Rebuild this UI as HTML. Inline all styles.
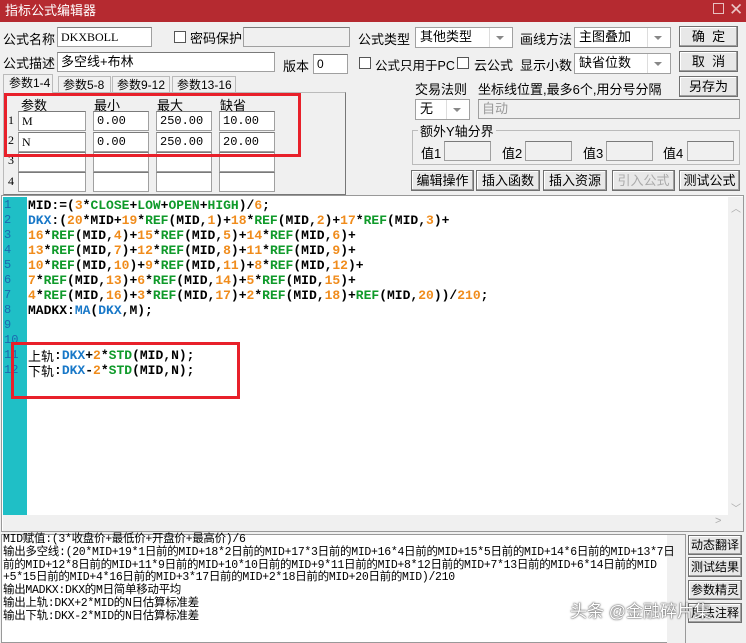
<!DOCTYPE html>
<html><head><meta charset="utf-8"><style>
*{box-sizing:border-box;margin:0;padding:0}
body{width:746px;height:643px;background:#f0f0f0;position:relative;overflow:hidden;font-family:"Liberation Sans","Noto Sans CJK SC",sans-serif;font-size:13px;color:#000}
.a{position:absolute;white-space:nowrap}
.in{position:absolute;background:#fff;border:1px solid #a0a0a0;border-top-color:#7a7a7a;font-size:12px;padding:2px 3px;line-height:14px;white-space:nowrap}
.dis{background:#f0f0f0}
.cb{position:absolute;width:12px;height:12px;background:#fff;border:1px solid #555}
.btn{position:absolute;background:#e8e8e8;border:1px solid #707070;text-align:center;font-size:13px;line-height:19px;white-space:nowrap;box-shadow:inset -1px -1px 0 #a0a0a0,inset 1px 1px 0 #fff}
.sel{position:absolute;background:#fff;border:1px solid #a0a0a0;font-size:13px;line-height:18px;padding-left:4px}
.sel:after{content:"";position:absolute;right:0;top:0;width:22px;height:100%;border-left:1px solid #ddd;background:#fff}
.sel i{position:absolute;right:8px;top:8px;width:0;height:0;border-left:4px solid transparent;border-right:4px solid transparent;border-top:4px solid #888;z-index:2}
.code{position:absolute;left:28px;top:198px;font-family:"Liberation Mono",monospace;font-weight:bold;font-size:13px;line-height:15px;white-space:pre;color:#000}
.code .c{font-weight:normal;font-family:'Noto Sans CJK SC',sans-serif;display:inline-block;height:15px;line-height:15px;vertical-align:top;overflow:visible}
.n{color:#f08c1c}.f{color:#0f9a2a}.b{color:#1878c8}
.ln{position:absolute;left:4px;width:20px;font-family:"Liberation Mono",monospace;font-size:12px;color:#1a6ab0;line-height:15px}
.bt{position:absolute;left:3px;top:534px;font-family:"Liberation Mono","Noto Sans CJK SC",monospace;font-size:11.5px;line-height:12.8px;white-space:pre;letter-spacing:-0.3px}
</style></head><body>
<div class="a" style="left:0;top:0;width:746px;height:22px;background:#b52a30;color:#fff;font-size:13px;line-height:22px;padding-left:5px">指标公式编辑器</div>
<div class="a" style="left:713px;top:3px;width:11px;height:11px;border:1px solid #e8c0c0"></div>
<div class="a" style="left:729px;top:0;color:#eac4c4;font-size:17px;line-height:20px">✕</div>

<div class="a" style="left:3px;top:29px">公式名称</div>
<div class="in" style="left:57px;top:27px;width:95px;height:20px;font-family:'Liberation Serif',serif">DKXBOLL</div>
<div class="cb" style="left:174px;top:31px"></div>
<div class="a" style="left:190px;top:28px">密码保护</div>
<div class="in dis" style="left:243px;top:27px;width:107px;height:20px"></div>
<div class="a" style="left:3px;top:53px">公式描述</div>
<div class="in" style="left:57px;top:52px;width:218px;height:20px;font-size:13px">多空线+布林</div>
<div class="a" style="left:283px;top:56px">版本</div>
<div class="in" style="left:313px;top:54px;width:35px;height:20px">0</div>

<div class="a" style="left:3px;top:74px;width:50px;height:19px;font-size:12px;line-height:17px;padding-left:5px;border:1px solid #bbb;border-bottom:none;background:#f0f0f0;z-index:2">参数1-4</div>
<div class="a" style="left:58px;top:76px;width:53px;height:17px;font-size:12px;line-height:17px;padding-left:4px;border:1px solid #bbb">参数5-8</div>
<div class="a" style="left:112px;top:76px;width:58px;height:17px;font-size:12px;line-height:17px;padding-left:4px;border:1px solid #bbb">参数9-12</div>
<div class="a" style="left:172px;top:76px;width:64px;height:17px;font-size:12px;line-height:17px;padding-left:4px;border:1px solid #bbb">参数13-16</div>
<div class="a" style="left:3px;top:92px;width:343px;height:103px;border:1px solid #bbb;border-right-color:#777;border-bottom-color:#777"></div>
<div class="a" style="left:21px;top:95px">参数</div><div class="a" style="left:94px;top:95px">最小</div><div class="a" style="left:157px;top:95px">最大</div><div class="a" style="left:220px;top:95px">缺省</div>
<div class="a" style="left:8px;top:113px;font-size:12px;font-family:'Liberation Serif',serif">1</div>
<div class="a" style="left:8px;top:133px;font-size:12px;font-family:'Liberation Serif',serif">2</div>
<div class="a" style="left:8px;top:153px;font-size:12px;font-family:'Liberation Serif',serif">3</div>
<div class="a" style="left:8px;top:174px;font-size:12px;font-family:'Liberation Serif',serif">4</div>
<div class="in" style="left:18px;top:111px;width:68px;height:20px;font-family:'Liberation Serif',serif">M</div>
<div class="in" style="left:93px;top:111px;width:56px;height:20px;font-family:'Liberation Mono',monospace">0.00</div>
<div class="in" style="left:156px;top:111px;width:56px;height:20px;font-family:'Liberation Mono',monospace">250.00</div>
<div class="in" style="left:219px;top:111px;width:56px;height:20px;font-family:'Liberation Mono',monospace">10.00</div>
<div class="in" style="left:18px;top:132px;width:68px;height:20px;font-family:'Liberation Serif',serif">N</div>
<div class="in" style="left:93px;top:132px;width:56px;height:20px;font-family:'Liberation Mono',monospace">0.00</div>
<div class="in" style="left:156px;top:132px;width:56px;height:20px;font-family:'Liberation Mono',monospace">250.00</div>
<div class="in" style="left:219px;top:132px;width:56px;height:20px;font-family:'Liberation Mono',monospace">20.00</div>
<div class="in" style="left:18px;top:152px;width:68px;height:20px"></div><div class="in" style="left:93px;top:152px;width:56px;height:20px"></div><div class="in" style="left:156px;top:152px;width:56px;height:20px"></div><div class="in" style="left:219px;top:152px;width:56px;height:20px"></div>
<div class="in" style="left:18px;top:172px;width:68px;height:20px"></div><div class="in" style="left:93px;top:172px;width:56px;height:20px"></div><div class="in" style="left:156px;top:172px;width:56px;height:20px"></div><div class="in" style="left:219px;top:172px;width:56px;height:20px"></div>
<div class="a" style="left:4px;top:93px;width:297px;height:64px;border:3px solid #e8202a"></div>

<div class="a" style="left:358px;top:29px">公式类型</div>
<div class="sel" style="left:415px;top:27px;width:98px;height:21px">其他类型<i></i></div>
<div class="a" style="left:520px;top:29px">画线方法</div>
<div class="sel" style="left:574px;top:27px;width:97px;height:21px">主图叠加<i></i></div>
<div class="btn" style="left:679px;top:26px;width:59px;height:21px">确&nbsp;&nbsp;定</div>
<div class="cb" style="left:359px;top:57px"></div>
<div class="a" style="left:375px;top:55px;font-size:12.5px">公式只用于PC</div>
<div class="cb" style="left:457px;top:57px"></div>
<div class="a" style="left:474px;top:55px">云公式</div>
<div class="a" style="left:520px;top:55px">显示小数</div>
<div class="sel" style="left:574px;top:53px;width:97px;height:21px">缺省位数<i></i></div>
<div class="btn" style="left:679px;top:51px;width:59px;height:21px">取&nbsp;&nbsp;消</div>
<div class="a" style="left:415px;top:79px">交易法则</div>
<div class="a" style="left:478px;top:79px">坐标线位置,最多6个,用分号分隔</div>
<div class="btn" style="left:679px;top:76px;width:59px;height:21px">另存为</div>
<div class="sel" style="left:415px;top:99px;width:55px;height:21px">无<i></i></div>
<div class="in dis" style="left:478px;top:99px;width:262px;height:20px;color:#999;font-size:13px">自动</div>
<div class="a" style="left:412px;top:130px;width:328px;height:35px;border:1px solid #bbb"></div>
<div class="a" style="left:418px;top:121px;background:#f0f0f0;padding:0 2px">额外Y轴分界</div>
<div class="a" style="left:421px;top:143px">值1</div><div class="in dis" style="left:444px;top:141px;width:47px;height:20px"></div>
<div class="a" style="left:502px;top:143px">值2</div><div class="in dis" style="left:525px;top:141px;width:47px;height:20px"></div>
<div class="a" style="left:583px;top:143px">值3</div><div class="in dis" style="left:606px;top:141px;width:47px;height:20px"></div>
<div class="a" style="left:663px;top:143px">值4</div><div class="in dis" style="left:687px;top:141px;width:47px;height:20px"></div>
<div class="btn" style="left:411px;top:170px;width:63px;height:21px">编辑操作</div>
<div class="btn" style="left:476px;top:170px;width:64px;height:21px">插入函数</div>
<div class="btn" style="left:543px;top:170px;width:64px;height:21px">插入资源</div>
<div class="btn" style="left:612px;top:170px;width:63px;height:21px;color:#aaa">引入公式</div>
<div class="btn" style="left:679px;top:170px;width:61px;height:21px">测试公式</div>

<div class="a" style="left:1px;top:195px;width:743px;height:337px;background:#fff;border:1px solid #999"></div>
<div class="a" style="left:3px;top:197px;width:24px;height:318px;background:#1fbfc6"></div>
<div class="a" style="left:728px;top:197px;width:15px;height:318px;background:#f0f0f0"></div>
<div class="a" style="left:3px;top:515px;width:740px;height:16px;background:#f0f0f0"></div>
<div class="a" style="left:731px;top:200px;color:#aaa;font-size:10px">︿</div>
<div class="a" style="left:731px;top:500px;color:#aaa;font-size:10px">﹀</div>
<div class="a" style="left:715px;top:515px;color:#aaa;font-size:11px">&gt;</div>
<div class="ln" style="top:198px">1<br>2<br>3<br>4<br>5<br>6<br>7<br>8<br>9<br>10<br>11<br>12</div>
<div class="code"><span>MID:=(</span><span class="n">3</span>*<span class="f">CLOSE</span>+<span class="f">LOW</span>+<span class="f">OPEN</span>+<span class="f">HIGH</span>)/<span class="n">6</span>;
<span class="b">DKX</span>:(<span class="n">20</span>*MID+<span class="n">19</span>*<span class="f">REF</span>(MID,<span class="n">1</span>)+<span class="n">18</span>*<span class="f">REF</span>(MID,<span class="n">2</span>)+<span class="n">17</span>*<span class="f">REF</span>(MID,<span class="n">3</span>)+
<span class="n">16</span>*<span class="f">REF</span>(MID,<span class="n">4</span>)+<span class="n">15</span>*<span class="f">REF</span>(MID,<span class="n">5</span>)+<span class="n">14</span>*<span class="f">REF</span>(MID,<span class="n">6</span>)+
<span class="n">13</span>*<span class="f">REF</span>(MID,<span class="n">7</span>)+<span class="n">12</span>*<span class="f">REF</span>(MID,<span class="n">8</span>)+<span class="n">11</span>*<span class="f">REF</span>(MID,<span class="n">9</span>)+
<span class="n">10</span>*<span class="f">REF</span>(MID,<span class="n">10</span>)+<span class="n">9</span>*<span class="f">REF</span>(MID,<span class="n">11</span>)+<span class="n">8</span>*<span class="f">REF</span>(MID,<span class="n">12</span>)+
<span class="n">7</span>*<span class="f">REF</span>(MID,<span class="n">13</span>)+<span class="n">6</span>*<span class="f">REF</span>(MID,<span class="n">14</span>)+<span class="n">5</span>*<span class="f">REF</span>(MID,<span class="n">15</span>)+
<span class="n">4</span>*<span class="f">REF</span>(MID,<span class="n">16</span>)+<span class="n">3</span>*<span class="f">REF</span>(MID,<span class="n">17</span>)+<span class="n">2</span>*<span class="f">REF</span>(MID,<span class="n">18</span>)+<span class="f">REF</span>(MID,<span class="n">20</span>))/<span class="n">210</span>;
MADKX:<span class="b">MA</span>(<span class="b">DKX</span>,M);


<span class="c">上轨</span>:<span class="b">DKX</span>+<span class="n">2</span>*<span class="f">STD</span>(MID,N);
<span class="c">下轨</span>:<span class="b">DKX</span>-<span class="n">2</span>*<span class="f">STD</span>(MID,N);</div>
<div class="a" style="left:11px;top:342px;width:229px;height:57px;border:3px solid #e8202a"></div>

<div class="a" style="left:1px;top:534px;width:685px;height:109px;background:#fff;border:1px solid #999"></div>
<div class="a" style="left:667px;top:535px;width:18px;height:108px;background:#f0f0f0"></div>
<div class="bt">MID赋值:(3*收盘价+最低价+开盘价+最高价)/6
输出多空线:(20*MID+19*1日前的MID+18*2日前的MID+17*3日前的MID+16*4日前的MID+15*5日前的MID+14*6日前的MID+13*7日
前的MID+12*8日前的MID+11*9日前的MID+10*10日前的MID+9*11日前的MID+8*12日前的MID+7*13日前的MID+6*14日前的MID
+5*15日前的MID+4*16日前的MID+3*17日前的MID+2*18日前的MID+20日前的MID)/210
输出MADKX:DKX的M日简单移动平均
输出上轨:DKX+2*MID的N日估算标准差
输出下轨:DKX-2*MID的N日估算标准差</div>
<div class="btn" style="left:688px;top:535px;width:54px;height:20px;font-size:12px">动态翻译</div>
<div class="btn" style="left:688px;top:557px;width:54px;height:20px;font-size:12px">测试结果</div>
<div class="btn" style="left:688px;top:580px;width:54px;height:20px;font-size:12px">参数精灵</div>
<div class="btn" style="left:688px;top:603px;width:54px;height:20px;font-size:12px">用法注释</div>
<div class="a" style="left:570px;top:597px;color:#fff;font-size:17px;text-shadow:0 0 2px #555,0 0 1px #333">头条 @金融碎片集</div>
</body></html>
